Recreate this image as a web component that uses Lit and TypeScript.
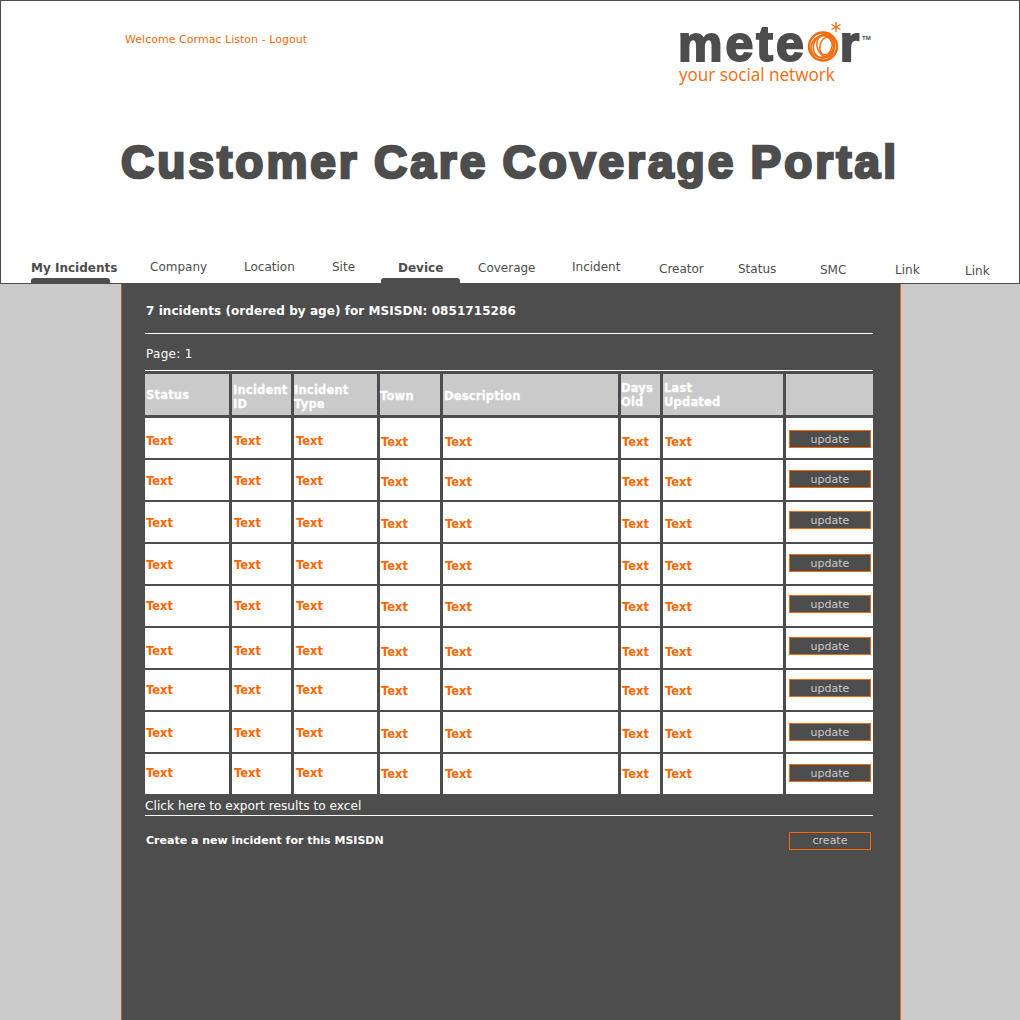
import { LitElement, html, css, svg } from 'lit';
import { customElement } from 'lit/decorators.js';

// width up to the next tab, drop of the label, and the underline start if active
const TABS = [
  { label: 'My Incidents', width: 119, top: 1, bar: 0 },
  { label: 'Company', width: 94, top: 0 },
  { label: 'Location', width: 88, top: 0 },
  { label: 'Site', width: 66, top: 0 },
  { label: 'Device', width: 80, top: 1, bar: -17 },
  { label: 'Coverage', width: 94, top: 1 },
  { label: 'Incident', width: 87, top: 0 },
  { label: 'Creator', width: 79, top: 2 },
  { label: 'Status', width: 82, top: 2 },
  { label: 'SMC', width: 75, top: 3 },
  { label: 'Link', width: 70, top: 3 },
  { label: 'Link', width: 50, top: 4 },
];

const HEADERS = [
  { lines: ['Status'], left: 1, top: 0 },
  { lines: ['Incident', 'ID'], left: 1, top: 4 },
  { lines: ['Incident', 'Type'], left: 0, top: 4 },
  { lines: ['Town'], left: 0, top: 3 },
  { lines: ['Description'], left: 1, top: 3 },
  { lines: ['Days', 'Old'], left: 0, top: 0 },
  { lines: ['Last', 'Updated'], left: 1, top: 0 },
  { lines: [], left: 0, top: 0 },
];

// text inset per column, and whether the column sits a pixel lower
const COLUMNS = [
  { left: 1, drop: 0 },
  { left: 2, drop: 0 },
  { left: 2, drop: 0 },
  { left: 1, drop: 1 },
  { left: 2, drop: 1 },
  { left: 1, drop: 1 },
  { left: 2, drop: 1 },
];

// y offsets of the text and of the button inside each row, they are uneven in the original
const ROWS = [
  { text: 16, button: 12 },
  { text: 14, button: 10 },
  { text: 14, button: 9 },
  { text: 14, button: 10 },
  { text: 13, button: 9 },
  { text: 16, button: 9 },
  { text: 13, button: 9 },
  { text: 14, button: 11 },
  { text: 12, button: 10 },
];

const RING = svg`
  <g fill="none" stroke="#f26c0d" stroke-width="1.5">
    <circle cx="16" cy="15.5" r="14" stroke-width="2.4" />
    <ellipse cx="15.5" cy="15" rx="12" ry="10.5" transform="rotate(-35 16 15)" />
    <ellipse cx="17" cy="15" rx="10.5" ry="12" transform="rotate(20 16 15)" />
    <ellipse cx="18" cy="15.5" rx="8" ry="11" transform="rotate(-20 18 15)" />
    <ellipse cx="19" cy="15" rx="6" ry="9" transform="rotate(15 19 15)" />
  </g>
`;

@customElement('app-root')
export class AppRoot extends LitElement {
  static styles = css`
    :host {
      display: block;
      background: #cacaca;
      font-family: 'DejaVu Sans', Verdana, sans-serif;
    }

    .header {
      box-sizing: border-box;
      height: 284px;
      background: #fff;
      border: 1px solid #4d4d4d;
      display: flex;
      flex-direction: column;
    }

    .top {
      display: flex;
      justify-content: space-between;
      padding: 0 0 0 124px;
    }

    .welcome {
      margin-top: 32px;
      font-size: 11px;
      line-height: 14px;
      letter-spacing: 0.03px;
      color: #f26c0d;
    }

    .logo {
      width: 341px;
      margin-top: 21px;
      color: #4d4d4d;
    }

    .wordmark {
      position: relative;
      display: flex;
      align-items: flex-end;
      height: 44px;
      font: 700 50px/44px 'Liberation Sans', Arial, sans-serif;
      letter-spacing: 3px;
      -webkit-text-stroke: 2px #4d4d4d;
    }

    .wordmark span {
      display: block;
      line-height: 44px;
    }

    .wordmark svg {
      display: block;
      margin: 0 1px 3px 0;
      flex: none;
    }

    .star {
      position: absolute;
      left: 152px;
      top: -1px;
    }

    .tm {
      position: absolute;
      left: 184px;
      top: 12px;
      font: 700 6px/8px 'Liberation Sans', Arial, sans-serif;
      letter-spacing: 0;
      -webkit-text-stroke: 0;
    }

    .tagline {
      margin-left: 1px;
      font: 400 19px/16px 'Open Sans', sans-serif;
      color: #f26c0d;
      white-space: nowrap;
      transform: scaleX(0.9);
      transform-origin: left center;
    }

    h1 {
      margin: 52px 0 0;
      text-align: center;
      font: 700 46px/56px 'Liberation Sans', Arial, sans-serif;
      letter-spacing: 3px;
      word-spacing: -1.5px;
      color: #4d4d4d;
      -webkit-text-stroke: 2.6px #4d4d4d;
    }

    .tabs {
      display: flex;
      margin-top: auto;
      padding-left: 30px;
      height: 28px;
    }

    .tab {
      position: relative;
      flex: none;
      font-size: 12px;
      line-height: 15px;
      color: #4d4d4d;
      white-space: nowrap;
    }

    .tab span {
      display: block;
      margin-top: 5px;
    }

    .tab.active {
      font-weight: 700;
    }

    .bar {
      position: absolute;
      bottom: 0;
      width: 79px;
      height: 5px;
      background: #4d4d4d;
      border-radius: 3px 3px 0 0;
    }

    .panel {
      box-sizing: border-box;
      width: 780px;
      height: 736px;
      margin-left: 121px;
      padding: 0 27px 0 23px;
      background: #4d4d4d;
      border-left: 1px solid #a8652e;
      border-right: 1px solid #f26c0d;
      color: #fff;
      font-size: 12px;
    }

    .summary {
      margin: 0;
      padding: 19px 0 14px 1px;
      font-weight: 700;
      font-size: 12px;
      line-height: 16px;
      letter-spacing: 0.06px;
      border-bottom: 1px solid #fff;
    }

    .page {
      padding: 12px 0 8px 1px;
      line-height: 16px;
      letter-spacing: 0.3px;
      border-bottom: 1px solid #fff;
    }

    .grid {
      display: grid;
      grid-template-columns: 84px 59px 83px 60px 175px 39px 120px 87px;
      column-gap: 3px;
      row-gap: 2px;
      margin-top: 3px;
    }

    .head {
      box-sizing: border-box;
      height: 41px;
      margin-bottom: 1px;
      display: flex;
      flex-direction: column;
      justify-content: center;
      background: #cacaca;
      color: #fff;
      font-weight: 700;
      font-size: 11.5px;
      line-height: 14px;
      letter-spacing: 0.2px;
      -webkit-text-stroke: 0.3px #fff;
    }

    .cell {
      box-sizing: border-box;
      height: 40px;
      background: #fff;
      color: #ff6600;
      font-weight: 700;
      font-size: 11.5px;
      line-height: 14px;
    }

    .action {
      padding-left: 3px;
    }

    .btn {
      box-sizing: border-box;
      display: block;
      width: 82px;
      height: 18px;
      padding: 0;
      background: #4d4d4d;
      border: 1px solid #ff6600;
      color: #cacaca;
      font: 400 11px/16px 'DejaVu Sans', Verdana, sans-serif;
      text-align: center;
    }

    .action .btn {
      padding-top: 1px;
    }

    .export {
      padding: 4px 0 1px;
      font-size: 12.2px;
      line-height: 16px;
      border-bottom: 1px solid #fff;
    }

    .create {
      display: flex;
      justify-content: space-between;
      align-items: center;
      padding: 16px 2px 0 1px;
      font-weight: 700;
      font-size: 11px;
    }

    .create span {
      margin-bottom: 2px;
    }
  `;

  render() {
    return html`
      <header class="header">
        <div class="top">
          <div class="welcome">Welcome Cormac Liston - Logout</div>
          <div class="logo">
            <div class="wordmark">
              <span>mete</span>
              <svg width="32" height="32" viewBox="0 0 32 32">${RING}</svg>
              <span>r</span>
              <svg class="star" width="12" height="12" viewBox="0 0 12 12">
                <path d="M6 1v10M1.5 3.5l9 5M1.5 8.5l9-5" stroke="#f26c0d" stroke-width="1.4" />
              </svg>
              <div class="tm">TM</div>
            </div>
            <div class="tagline">your social network</div>
          </div>
        </div>
        <h1>Customer Care Coverage Portal</h1>
        <nav class="tabs">
          ${TABS.map(
            (t) => html`
              <div class="tab ${t.bar !== undefined ? 'active' : ''}" style="width:${t.width}px">
                <span style="padding-top:${t.top}px">${t.label}</span>
                ${t.bar !== undefined ? html`<div class="bar" style="left:${t.bar}px"></div>` : ''}
              </div>
            `
          )}
        </nav>
      </header>
      <main class="panel">
        <p class="summary">7 incidents (ordered by age) for MSISDN: 0851715286</p>
        <div class="page">Page: 1</div>
        <div class="grid">
          ${HEADERS.map(
            (h) => html`
              <div class="head" style="padding:${h.top}px 0 0 ${h.left}px">
                ${h.lines.map((l) => html`<div>${l}</div>`)}
              </div>
            `
          )}
          ${ROWS.map(
            (r) => html`
              ${COLUMNS.map(
                (c) => html`
                  <div class="cell" style="padding:${r.text + c.drop}px 0 0 ${c.left}px">Text</div>
                `
              )}
              <div class="cell action" style="padding-top:${r.button}px">
                <button class="btn">update</button>
              </div>
            `
          )}
        </div>
        <div class="export">Click here to export results to excel</div>
        <div class="create">
          <span>Create a new incident for this MSISDN</span>
          <button class="btn">create</button>
        </div>
      </main>
    `;
  }
}
